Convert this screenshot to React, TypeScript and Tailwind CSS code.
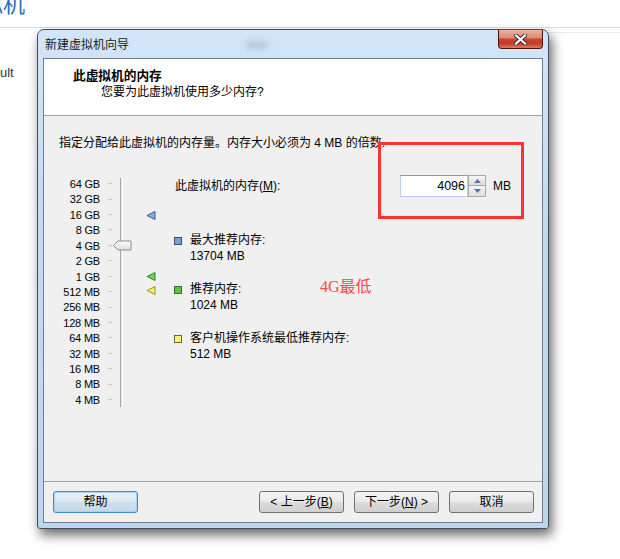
import React from "react";

const labels = ["64 GB","32 GB","16 GB","8 GB","4 GB","2 GB","1 GB","512 MB","256 MB","128 MB","64 MB","32 MB","16 MB","8 MB","4 MB"];

function Marker({ fill, stroke, top }: { fill: string; stroke: string; top: string }) {
  return (
    <svg className={`absolute left-0 ${top}`} width="10" height="9" viewBox="0 0 10 9">
      <polygon points="1,4.5 9,0.5 9,8.5" fill={fill} stroke={stroke} strokeWidth="1" strokeLinejoin="round" />
    </svg>
  );
}

function LegendItem({ color, border, title, value, className }: { color: string; border: string; title: string; value: string; className: string }) {
  return (
    <div className={`flex items-start ${className}`}>
      <div className={`mt-[4px] h-[8px] w-[8px] border ${border} ${color}`} />
      <div className="ml-[8px] flex flex-col text-[12px] leading-[15.5px]">
        <span>{title}</span>
        <span>{value}</span>
      </div>
    </div>
  );
}

const btn =
  "flex h-[22px] w-[85px] items-center justify-center rounded-[3px] border border-[#707070] bg-[image:linear-gradient(#f2f2f2_0%,#ebebeb_48%,#dddddd_52%,#cfcfcf_100%)] text-[12px] leading-[14px] text-black";

export default function App() {
  return (
    <div className="relative h-[559px] w-[620px] overflow-hidden bg-white font-['Liberation_Sans','Noto_Sans_CJK_SC',sans-serif] text-black">
      {/* background page */}
      <div className="h-[28px] overflow-hidden border-b border-[#dbe2e8]">
        <div className="-ml-[19px] -mt-[6px] text-[22px] leading-[22px] text-[#2b6cb8]">拟机</div>
      </div>
      <div className="ml-[540px] mt-[4px] h-px bg-[#e3e9ee]" />
      <div className="mt-[32px] text-[13px] leading-[16px] text-[#333]">ult</div>

      {/* dialog window */}
      <div className="absolute left-[37px] top-[29px] h-[500px] w-[512px] rounded-t-[7px] rounded-b-[3px] border border-[#3f4d5e] bg-[image:linear-gradient(#d3e5f8_0%,#c3daf2_40%,#bdd5ee_100%)] shadow-[3px_6px_12px_rgba(0,0,0,0.6)]">
        <div className="absolute left-[208px] top-[11px] h-[8px] w-[22px] rounded-full bg-[#9aa9bb] opacity-50 blur-[3px]" />
        {/* title bar */}
        <div className="relative flex h-[28px] items-start justify-between">
          <div className="pl-[7px] pt-[8px] text-[12px] leading-[14px] text-[#1a1a1a]">新建虚拟机向导</div>
          <div className="mr-[5px] flex h-[19px] w-[45px] items-center justify-center rounded-b-[4px] border border-t-0 border-[#4a1208] bg-[image:linear-gradient(#eab1a4_0%,#dc8a75_42%,#c7442d_52%,#c33d27_75%,#da7c60_100%)]">
            <svg width="13" height="11" viewBox="0 0 13 11">
              <path d="M2 1.5 L11 9.5 M11 1.5 L2 9.5" stroke="#3a2a2a" strokeWidth="4" strokeLinecap="square" />
              <path d="M2 1.5 L11 9.5 M11 1.5 L2 9.5" stroke="#ffffff" strokeWidth="2.2" strokeLinecap="square" />
            </svg>
          </div>
        </div>

        {/* client area */}
        <div className="mx-[5px] flex h-[465px] flex-col border border-[#6e7f92] bg-[#f0f0f0]">
          {/* header */}
          <div className="h-[57px] border-b border-[#a0a0a0] bg-white pl-[29px] pt-[8px]">
            <div className="font-['Noto_Sans_CJK_SC',sans-serif] text-[12.7px] font-bold leading-[15px]">此虚拟机的内存</div>
            <div className="mt-[3px] pl-[28px] text-[12px] leading-[15px]">您要为此虚拟机使用多少内存?</div>
          </div>

          {/* body */}
          <div className="flex-1 pl-[15px] pt-[20px]">
            <div className="text-[12px] leading-[14px]">指定分配给此虚拟机的内存量。内存大小必须为 4 MB 的倍数.</div>

            <div className="mt-[26px] flex items-start">
              <div className="flex w-[41px] flex-col items-end">
                {labels.map((l) => (
                  <div key={l} className="h-[15.43px] whitespace-nowrap text-[11px] leading-[16px] tracking-[-0.2px]">{l}</div>
                ))}
              </div>
              <div className="ml-[8px] flex w-[4px] flex-col">
                {labels.map((l) => (
                  <div key={l} className="flex h-[15.43px] items-center">
                    <div className="h-px w-[4px] bg-[#c9c9c9]" />
                  </div>
                ))}
              </div>
              <div className="relative h-[231px] w-[20px]">
                <div className="absolute left-[8px] top-[2px] h-[229px] w-[3px] border-l border-r border-l-[#a9a9a9] border-r-white bg-[#e4e4e4]" />
                <svg className="absolute left-[1px] top-[64px]" width="19" height="11" viewBox="0 0 19 11">
                  <defs>
                    <linearGradient id="th" x1="0" y1="0" x2="0" y2="1">
                      <stop offset="0" stopColor="#ffffff" />
                      <stop offset="1" stopColor="#dcdcdc" />
                    </linearGradient>
                  </defs>
                  <polygon points="0.5,5.5 5,1 18,1 18,10 5,10" fill="url(#th)" stroke="#8a8a8a" strokeWidth="1" strokeLinejoin="round" />
                </svg>
              </div>
              <div className="relative ml-[14px] h-[231px] w-[10px]">
                <Marker fill="#8eaede" stroke="#2f5a97" top="top-[35px]" />
                <Marker fill="#74cf5c" stroke="#2a8a1e" top="top-[96px]" />
                <Marker fill="#f4ef6e" stroke="#9a9320" top="top-[110px]" />
              </div>
              <div className="-mt-[1px] ml-[18px] flex flex-col">
                <div className="flex h-[22px] items-center">
                  <div className="w-[226px] pl-[1px] text-[12px] leading-[14px]">
                    此虚拟机的内存(<span className="underline">M</span>):
                  </div>
                  <div className="flex h-[22px] w-[68px] items-center justify-end border border-[#b9cde4] border-t-[#7d9dc5] bg-white pr-[2px] text-[12.5px]">4096</div>
                  <div className="flex h-[22px] w-[18px] flex-col">
                    <div className="flex h-[11px] items-center justify-center border border-[#a9a9a9] bg-[image:linear-gradient(#f6f6f6,#dedede)]">
                      <svg width="7" height="4" viewBox="0 0 7 4"><polygon points="3.5,0 7,4 0,4" fill="#5a74aa" /></svg>
                    </div>
                    <div className="flex h-[11px] items-center justify-center border border-t-0 border-[#a9a9a9] bg-[image:linear-gradient(#f6f6f6,#dedede)]">
                      <svg width="7" height="4" viewBox="0 0 7 4"><polygon points="0,0 7,0 3.5,4" fill="#5a74aa" /></svg>
                    </div>
                  </div>
                  <div className="ml-[7px] text-[12px] leading-[14px]">MB</div>
                </div>
                <LegendItem className="mt-[36px]" color="bg-[#7f9fcf]" border="border-[#2f4f80]" title="最大推荐内存:" value="13704 MB" />
                <LegendItem className="mt-[18px]" color="bg-[#5fc043]" border="border-[#2a7a1e]" title="推荐内存:" value="1024 MB" />
                <LegendItem className="mt-[18px]" color="bg-[#f6f27a]" border="border-[#6e6a1e]" title="客户机操作系统最低推荐内存:" value="512 MB" />
              </div>
            </div>
          </div>

          {/* footer */}
          <div className="flex h-[41px] items-start border-t border-[#a0a0a0] pl-[9px] pr-[8px] pt-[9px]">
            <div className="flex h-[22px] w-[85px] items-center justify-center rounded-[3px] border border-[#3c8dc9] bg-[image:linear-gradient(#e9f2f9_0%,#dde8f2_48%,#d0dfec_52%,#c6d8e8_100%)] text-[12px] leading-[14px] shadow-[inset_0_0_0_1px_#a6d3f0]">帮助</div>
            <div className="flex-1" />
            <div className={btn}>&lt; 上一步(<span className="underline">B</span>)</div>
            <div className={`ml-[10px] ${btn}`}>下一步(<span className="underline">N</span>) &gt;</div>
            <div className={`ml-[10px] ${btn}`}>取消</div>
          </div>
        </div>
      </div>

      {/* annotations */}
      <div className="absolute left-[378px] top-[142px] h-[77px] w-[146px] border-[3px] border-[#ff3333]" />
      <div className="absolute left-[320px] top-[278px] font-['Liberation_Serif','Noto_Sans_CJK_SC',serif] text-[16px] leading-[18px] text-[#ff4646]">4G最低</div>
    </div>
  );
}
